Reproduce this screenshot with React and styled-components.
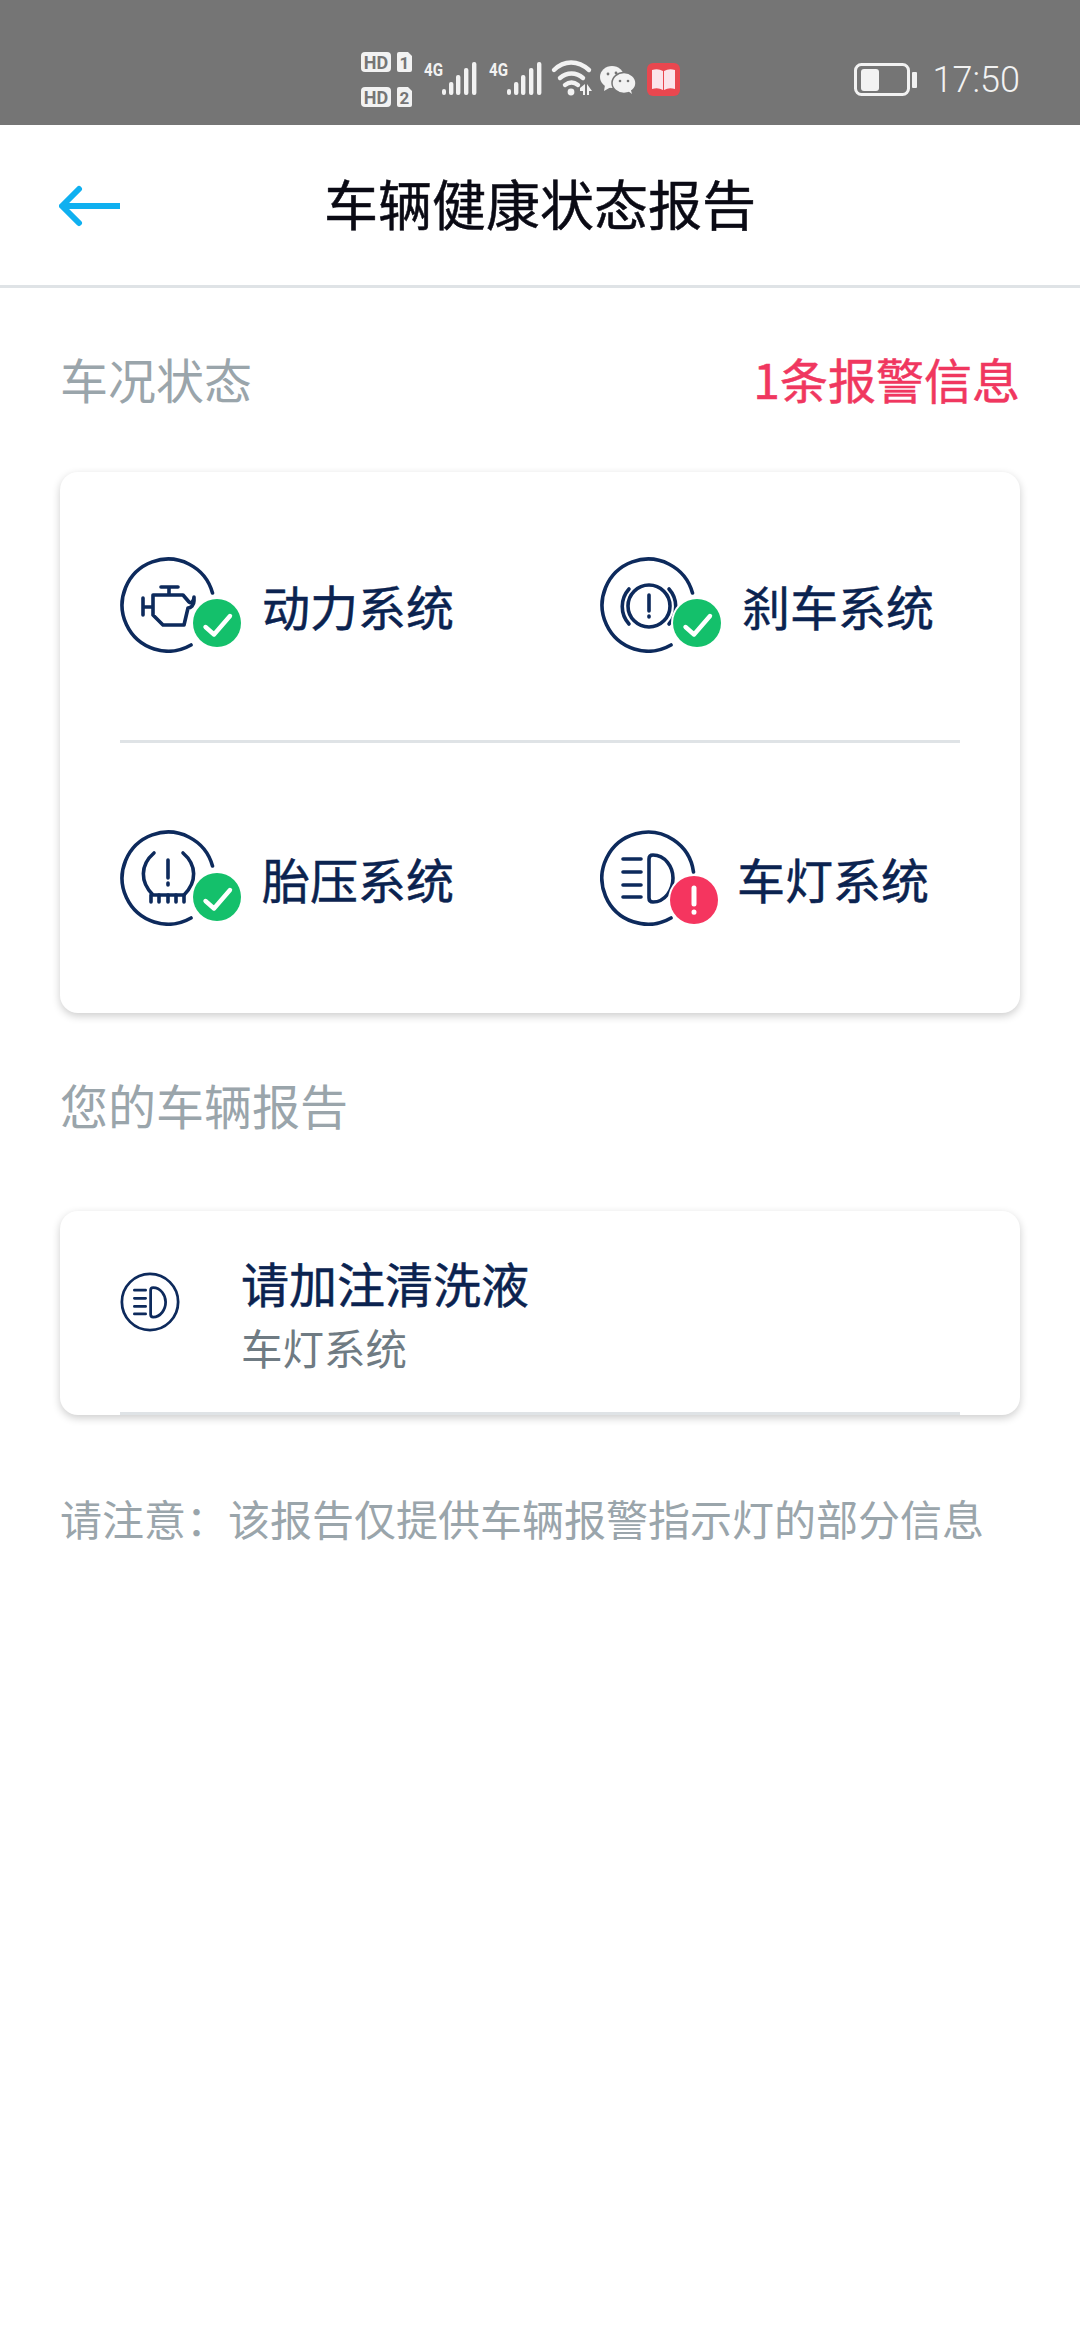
import React from 'react';
import styled, { createGlobalStyle } from 'styled-components';

const GlobalStyle = createGlobalStyle`
  html, body {
    margin: 0;
    padding: 0;
    background: #fff;
    font-family: "Noto Sans CJK SC", "Noto Sans", sans-serif;
  }
`;

const systems = [
  { name: '动力系统', icon: 'engine', arc: 'M92.5 36A46 46 0 1 0 71 88', ok: true, top: 42, left: 73, gap: 47 },
  { name: '刹车系统', icon: 'brake', arc: 'M92.5 36A46 46 0 1 0 71 88', ok: true, top: 42, left: 73, gap: 47 },
  { name: '胎压系统', icon: 'tire', arc: 'M92.5 36A46 46 0 1 0 71 88', ok: true, top: 43, left: 73, gap: 47 },
  { name: '车灯系统', icon: 'light', arc: 'M93.5 42A46 46 0 1 0 71 88', ok: false, top: 46, left: 70, gap: 42 },
];

function Glyph({ type }) {
  if (type === 'engine') {
    return (
      <g>
        <path d="M41 30H58M49 30V38M33 38H63L69 45C71 47 74 44 74 40V44C74 48 71 51 68 51L64 68H43L33 58V38M33 50H23M23 41V58" />
      </g>
    );
  }
  if (type === 'brake') {
    return (
      <g>
        <circle cx="49" cy="49" r="21" />
        <path d="M49 38V54M49 59V60" />
        <path d="M29 32C20 42 20 57 29 67M69 32C78 42 78 57 69 67" />
      </g>
    );
  }
  if (type === 'tire') {
    return (
      <g>
        <path d="M34 23C20 35 20 52 33 65H64C77 52 77 35 63 23" />
        <path d="M31 72V65M39 72V65M48 72V65M56 72V65M64 72V65" />
        <path d="M48 30V48M48 53V55" />
      </g>
    );
  }
  return (
    <g>
      <path d="M23 29H41M23 42H41M23 55H41M23 67H41" />
      <path d="M49 29Q49 25 53 25C65 25 73 37 73 48C73 60 65 72 53 72Q49 72 49 68Z" />
    </g>
  );
}

function SystemIcon({ item }) {
  return (
    <IconBox>
      <svg width="96" height="96" viewBox="0 0 96 96" fill="none" stroke="#0d2a5c" strokeWidth="3.6" strokeLinecap="round" strokeLinejoin="round">
        <path d={item.arc} />
        <Glyph type={item.icon} />
      </svg>
      <Badge $top={item.top} $left={item.left} $ok={item.ok}>
        {item.ok ? (
          <svg width="48" height="48" viewBox="0 0 48 48" fill="none" stroke="#fff" strokeWidth="4.4" strokeLinecap="round" strokeLinejoin="round">
            <path d="M12.5 28L21 35.5L37 17" />
          </svg>
        ) : (
          <svg width="48" height="48" viewBox="0 0 48 48" fill="none" stroke="#fff" strokeWidth="5" strokeLinecap="round">
            <path d="M24 12V28M24 36V36.2" />
          </svg>
        )}
      </Badge>
    </IconBox>
  );
}

function StatusIcons() {
  return (
    <svg width="320" height="60" viewBox="361 50 320 60">
      <rect x="361" y="52" width="30" height="20" rx="4" fill="#f2f2f2" />
      <text x="376" y="68.5" textAnchor="middle" fontSize="18" fontWeight="700" fontFamily="Roboto, sans-serif" fill="#757575">HD</text>
      <path d="M399 52H408L412 56V70Q412 72 410 72H399Q397 72 397 70V54Q397 52 399 52Z" fill="#f2f2f2" />
      <text x="404.5" y="68.5" textAnchor="middle" fontSize="17" fontWeight="700" fontFamily="Roboto, sans-serif" fill="#757575">1</text>
      <rect x="361" y="87" width="30" height="20" rx="4" fill="#f2f2f2" />
      <text x="376" y="103.5" textAnchor="middle" fontSize="18" fontWeight="700" fontFamily="Roboto, sans-serif" fill="#757575">HD</text>
      <path d="M399 87H408L412 91V105Q412 107 410 107H399Q397 107 397 105V89Q397 87 399 87Z" fill="#f2f2f2" />
      <text x="404.5" y="103.5" textAnchor="middle" fontSize="17" fontWeight="700" fontFamily="Roboto, sans-serif" fill="#757575">2</text>

      {[424, 489].map(x => (
        <g key={x} fill="#f2f2f2">
          <text x={x} y="76" fontSize="19" fontWeight="700" fontFamily="Roboto, sans-serif" textLength="19" lengthAdjust="spacingAndGlyphs">4G</text>
          <rect x={x + 18} y="89" width="4" height="6" rx="2" />
          <rect x={x + 25} y="82" width="4.4" height="13" rx="2" />
          <rect x={x + 32} y="75" width="4.4" height="20" rx="2" />
          <rect x={x + 40} y="68" width="4.4" height="27" rx="2" />
          <rect x={x + 48} y="62" width="4.4" height="33" rx="2" />
        </g>
      ))}

      <g fill="none" stroke="#f2f2f2" strokeWidth="4.4" strokeLinecap="round">
        <path d="M554 70C564 60 578 60 589 70" />
        <path d="M560 78C567 72 576 72 583 78" />
        <path d="M565 85C569 82 574 82 578 85" />
      </g>
      <circle cx="571" cy="92" r="3.4" fill="#f2f2f2" />
      <path d="M580 88L585 84V95H583V91H580ZM587 84L592 91H589V95H587Z" fill="#f2f2f2" />

      <ellipse cx="612" cy="77" rx="12" ry="11" fill="#f2f2f2" />
      <path d="M605 85L604 91L611 87Z" fill="#f2f2f2" />
      <ellipse cx="624" cy="83" rx="12" ry="10.5" fill="#f2f2f2" stroke="#757575" strokeWidth="1.5" />
      <path d="M628 91L632 94L630 87Z" fill="#f2f2f2" />
      <circle cx="608" cy="74" r="1.4" fill="#757575" />
      <circle cx="616" cy="73" r="1.4" fill="#757575" />
      <circle cx="620" cy="81" r="1.3" fill="#757575" />
      <circle cx="628" cy="81" r="1.3" fill="#757575" />

      <rect x="647" y="63" width="33" height="33" rx="6" fill="#e9474f" />
      <path d="M652 70Q658 68 663 71V90Q658 87 652 89Z" fill="#fbe4ea" />
      <path d="M664 71Q669 68 675 70V89Q669 87 664 90Z" fill="#fbe4ea" />
    </svg>
  );
}

function Battery() {
  return (
    <svg width="64" height="34" viewBox="0 0 64 34">
      <rect x="1.5" y="1.5" width="53" height="30" rx="6" fill="none" stroke="#f2f2f2" strokeWidth="3" />
      <rect x="7" y="6" width="18" height="22" rx="3" fill="#f2f2f2" />
      <rect x="58" y="9" width="5" height="16" rx="1" fill="#f2f2f2" />
    </svg>
  );
}

export default function App() {
  return (
    <Page>
      <GlobalStyle />
      <StatusBar>
        <StatusIcons />
        <StatusRight>
          <Battery />
          <Clock>17:50</Clock>
        </StatusRight>
      </StatusBar>

      <Header>
        <BackButton>
          <svg width="62" height="42" viewBox="0 0 62 42" fill="none" stroke="#0fb0f0" strokeWidth="6" strokeLinecap="round" strokeLinejoin="round">
            <path d="M3 21H61" strokeLinecap="butt" />
            <path d="M20 4L3 21L20 38" />
          </svg>
        </BackButton>
        <Title>车辆健康状态报告</Title>
      </Header>

      <Content>
        <SectionRow>
          <SectionTitle>车况状态</SectionTitle>
          <AlertCount>1条报警信息</AlertCount>
        </SectionRow>

        <SystemCard>
          <SystemGrid>
            {systems.map((item, index) => (
              <SystemCell key={index} $gap={item.gap} $second={index > 1}>
                <SystemIcon item={item} />
                <SystemName>{item.name}</SystemName>
              </SystemCell>
            ))}
          </SystemGrid>
        </SystemCard>

        <ReportHeading>您的车辆报告</ReportHeading>

        <ReportCard>
          <ReportRow>
            <ReportIcon>
              <svg width="60" height="60" viewBox="0 0 96 96" fill="none" stroke="#0d2a5c" strokeWidth="4.4" strokeLinecap="round" strokeLinejoin="round">
                <circle cx="48" cy="48" r="45" />
                <Glyph type="light" />
              </svg>
            </ReportIcon>
            <div>
              <ReportTitle>请加注清洗液</ReportTitle>
              <ReportSub>车灯系统</ReportSub>
            </div>
          </ReportRow>
        </ReportCard>

        <Note>请注意：该报告仅提供车辆报警指示灯的部分信息</Note>
      </Content>
    </Page>
  );
}

const Page = styled.div`
  width: 1080px;
  height: 2340px;
  background: #fff;
  overflow: hidden;
`;

const StatusBar = styled.div`
  height: 125px;
  background: #757575;
  display: flex;
  align-items: flex-start;
  justify-content: space-between;
  padding: 50px 60px 0 361px;
  box-sizing: border-box;
`;

const StatusRight = styled.div`
  display: flex;
  align-items: center;
  gap: 15px;
  margin-top: 13px;
`;

const Clock = styled.span`
  font-family: Roboto, sans-serif;
  font-weight: 300;
  font-size: 36px;
  line-height: 34px;
  color: #f2f2f2;
`;

const Header = styled.div`
  height: 163px;
  display: flex;
  align-items: center;
  justify-content: center;
  position: relative;
  border-bottom: 3px solid #dfe3e6;
  box-sizing: border-box;
`;

const BackButton = styled.div`
  position: absolute;
  left: 59px;
  top: 60px;
  display: flex;
`;

const Title = styled.div`
  font-size: 54px;
  color: #0a0a14;
  line-height: 60px;
  margin-top: -5px;
  -webkit-text-stroke: 0.5px #0a0a14;
`;

const Content = styled.div`
  padding: 0 60px;
`;

const SectionRow = styled.div`
  display: flex;
  justify-content: space-between;
  align-items: center;
  height: 70px;
  margin-top: 55px;
`;

const SectionTitle = styled.div`
  font-size: 48px;
  color: #9aa5ab;
  line-height: 70px;
`;

const AlertCount = styled.div`
  font-size: 48px;
  color: #f0375f;
  line-height: 70px;
  -webkit-text-stroke: 0.5px #f0375f;
`;

const SystemCard = styled.div`
  margin-top: 59px;
  height: 541px;
  border-radius: 18px;
  background: #fff;
  box-shadow: 0 3px 9px rgba(0, 0, 0, 0.2);
  padding: 0 60px;
  box-sizing: border-box;
`;

const SystemGrid = styled.div`
  display: grid;
  grid-template-columns: 480px 360px;
  grid-template-rows: 271px 270px;
`;

const SystemCell = styled.div`
  display: flex;
  align-items: center;
  gap: ${p => p.$gap}px;
  box-sizing: border-box;
  padding-bottom: ${p => (p.$second ? 0 : 3)}px;
  border-bottom: ${p => (p.$second ? 'none' : '3px solid #dfe3e6')};
`;

const IconBox = styled.div`
  position: relative;
  width: 96px;
  height: 96px;
  flex: none;
  svg {
    display: block;
  }
`;

const Badge = styled.div`
  position: absolute;
  top: ${p => p.$top}px;
  left: ${p => p.$left}px;
  width: 48px;
  height: 48px;
  border-radius: 50%;
  background: ${p => (p.$ok ? '#14c06b' : '#f5355f')};
  box-shadow: 0 0 0 2px #fff;
`;

const SystemName = styled.div`
  font-size: 48px;
  color: #0b2350;
  line-height: 60px;
  margin-left: -1px;
  -webkit-text-stroke: 0.5px #0b2350;
`;

const ReportHeading = styled.div`
  font-size: 48px;
  color: #9aa5ab;
  line-height: 70px;
  margin-top: 56px;
`;

const ReportCard = styled.div`
  margin-top: 72px;
  height: 204px;
  border-radius: 18px;
  background: #fff;
  box-shadow: 0 3px 9px rgba(0, 0, 0, 0.2);
  padding: 0 60px;
  box-sizing: border-box;
`;

const ReportRow = styled.div`
  height: 204px;
  box-sizing: border-box;
  border-bottom: 3px solid #dfe3e6;
  display: flex;
  align-items: center;
  padding-top: 3px;
`;

const ReportIcon = styled.div`
  width: 121px;
  flex: none;
  margin-top: -23px;
  svg {
    display: block;
  }
`;

const ReportTitle = styled.div`
  font-size: 48px;
  color: #0b2350;
  line-height: 60px;
  -webkit-text-stroke: 0.5px #0b2350;
`;

const ReportSub = styled.div`
  font-size: 41.5px;
  color: #6f7b83;
  line-height: 56px;
  margin-top: 7px;
`;

const Note = styled.div`
  font-size: 42px;
  color: #9aa5ab;
  line-height: 60px;
  margin-top: 73px;
  white-space: nowrap;
`;
